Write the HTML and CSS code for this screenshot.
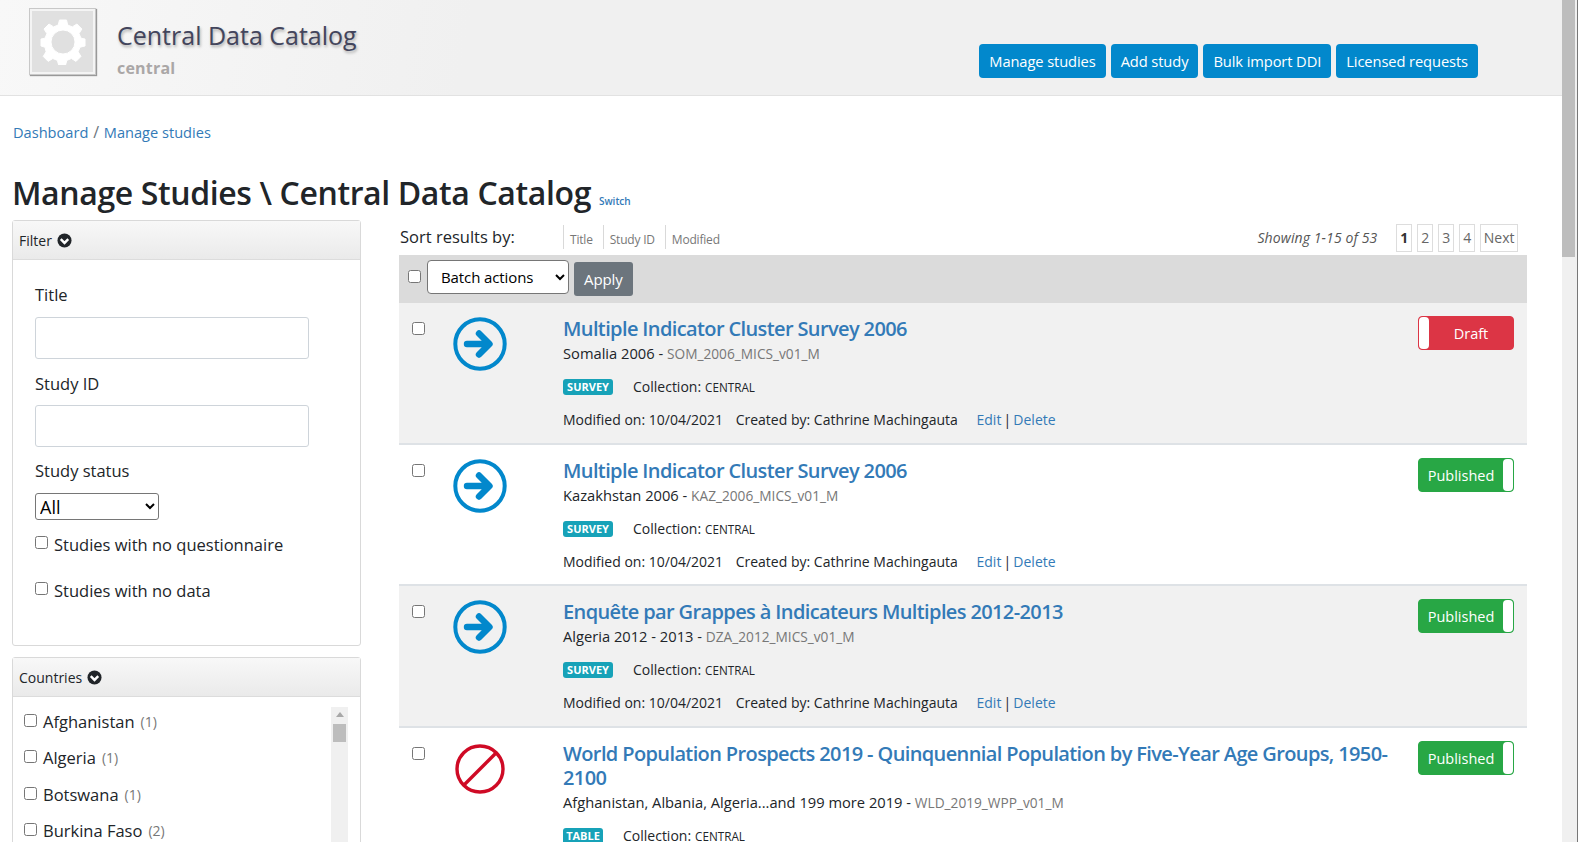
FILE: index.html
```html
<!DOCTYPE html>
<html lang="en">
  <head>
    <meta charset="UTF-8" />
    <meta name="viewport" content="width=device-width, initial-scale=1.0" />
    <title>Manage Studies - Central Data Catalog</title>
    <link rel="stylesheet" href="styles.css">
  </head>
  <body>
    <svg class="icon-defs" width="0" height="0">
      <symbol id="chevron-circle" viewBox="0 0 16 16">
        <circle cx="8" cy="8" r="7.5" fill="#212529" />
        <path d="M4 6.6 8 10.6 12 6.6" fill="none" stroke="#fff" stroke-width="2.6" />
      </symbol>
      <symbol id="arrow-circle" viewBox="0 0 54 54">
        <circle cx="27" cy="27" r="24.7" fill="none" stroke="#0288cc" stroke-width="4" />
        <path d="M14 27H36M26 16.5 36.5 27 26 37.5" fill="none" stroke="#0288cc" stroke-width="6.4" stroke-linecap="round" stroke-linejoin="round" />
      </symbol>
      <symbol id="no-circle" viewBox="0 0 50 50">
        <circle cx="25" cy="25" r="23" fill="none" stroke="#cf0a25" stroke-width="3.4" />
        <path d="M9 41 41 9" fill="none" stroke="#cf0a25" stroke-width="3.4" />
      </symbol>
    </svg>

    <div class="page">
      <header class="site-header">
        <div class="logo">
          <svg width="46" height="46" viewBox="0 0 46 46">
            <path fill="#fff" fill-rule="evenodd" stroke="#fff" stroke-width="1" stroke-linejoin="round" d="M19.5 1h7l1.2 5 4.6 1.9 4.6-2.9 5 5-2.9 4.6L41 19.2l4 .8v7l-5 1.2-1.9 4.6 2.9 4.6-5 5-4.6-2.9-4.6 1.9-1.2 4.5h-7l-1.2-4.5-4.6-1.9-4.6 2.9-5-5 2.9-4.6L5 28.2 1 27v-7l4-.8 1.9-4.6-2.9-4.6 5-5 4.6 2.9 4.6-1.9zM23 11a12 12 0 1 0 0 24 12 12 0 0 0 0-24z" />
          </svg>
        </div>
        <div class="site-title">
          <h3>Central Data Catalog</h3>
          <span>central</span>
        </div>
        <nav class="top-actions">
          <a href="#">Manage studies</a>
          <a href="#">Add study</a>
          <a href="#">Bulk import DDI</a>
          <a href="#">Licensed requests</a>
        </nav>
      </header>

      <main class="content">
        <div class="breadcrumb"><a href="#">Dashboard</a> <i>/</i> <a href="#">Manage studies</a></div>
        <h1>Manage Studies \ Central Data Catalog <a href="#" class="switch">Switch</a></h1>

        <div class="columns">
          <aside class="sidebar">
            <section class="panel">
              <div class="panel-head">Filter <svg><use href="#chevron-circle" /></svg></div>
              <div class="filter-body">
                <label class="field-label">Title</label>
                <input type="text" class="text-input" />
                <label class="field-label">Study ID</label>
                <input type="text" class="text-input" />
                <label class="field-label">Study status</label>
                <select class="status-select"><option>All</option></select>
                <label class="check-line"><input type="checkbox" /> Studies with no questionnaire</label>
                <label class="check-line"><input type="checkbox" /> Studies with no data</label>
              </div>
            </section>

            <section class="panel">
              <div class="panel-head">Countries <svg><use href="#chevron-circle" /></svg></div>
              <div class="country-list">
                <label><input type="checkbox" /> Afghanistan <span>(1)</span></label>
                <label><input type="checkbox" /> Algeria <span>(1)</span></label>
                <label><input type="checkbox" /> Botswana <span>(1)</span></label>
                <label><input type="checkbox" /> Burkina Faso <span>(2)</span></label>
                <div class="mini-scroll"><b></b><em></em></div>
              </div>
            </section>
          </aside>

          <section class="results">
            <div class="sort-row">
              <span class="sort-label">Sort results by:</span>
              <a href="#" class="sort-link">Title</a>
              <a href="#" class="sort-link">Study ID</a>
              <a href="#" class="sort-link">Modified</a>
              <span class="showing">Showing 1-15 of 53</span>
              <div class="pager">
                <a href="#" class="current">1</a>
                <a href="#">2</a>
                <a href="#">3</a>
                <a href="#">4</a>
                <a href="#">Next</a>
              </div>
            </div>

            <div class="batch-bar">
              <input type="checkbox" />
              <select class="batch-select"><option>Batch actions</option></select>
              <button class="apply">Apply</button>
            </div>

            <article class="study">
              <input type="checkbox" />
              <svg class="study-icon"><use href="#arrow-circle" /></svg>
              <div class="study-body">
                <a href="#" class="study-title">Multiple Indicator Cluster Survey 2006</a>
                <div class="study-sub">Somalia 2006 - <span>SOM_2006_MICS_v01_M</span></div>
                <div class="study-meta"><b class="badge">SURVEY</b> Collection: <small>CENTRAL</small></div>
                <div class="study-foot">Modified on: 10/04/2021 <span class="by">Created by: Cathrine Machingauta</span> <span class="links"><a href="#">Edit</a> | <a href="#">Delete</a></span></div>
              </div>
              <div class="status draft"><i></i><span>Draft</span></div>
            </article>

            <article class="study">
              <input type="checkbox" />
              <svg class="study-icon"><use href="#arrow-circle" /></svg>
              <div class="study-body">
                <a href="#" class="study-title">Multiple Indicator Cluster Survey 2006</a>
                <div class="study-sub">Kazakhstan 2006 - <span>KAZ_2006_MICS_v01_M</span></div>
                <div class="study-meta"><b class="badge">SURVEY</b> Collection: <small>CENTRAL</small></div>
                <div class="study-foot">Modified on: 10/04/2021 <span class="by">Created by: Cathrine Machingauta</span> <span class="links"><a href="#">Edit</a> | <a href="#">Delete</a></span></div>
              </div>
              <div class="status published"><span>Published</span><i></i></div>
            </article>

            <article class="study">
              <input type="checkbox" />
              <svg class="study-icon"><use href="#arrow-circle" /></svg>
              <div class="study-body">
                <a href="#" class="study-title">Enquête par Grappes à Indicateurs Multiples 2012-2013</a>
                <div class="study-sub">Algeria 2012 - 2013 - <span>DZA_2012_MICS_v01_M</span></div>
                <div class="study-meta"><b class="badge">SURVEY</b> Collection: <small>CENTRAL</small></div>
                <div class="study-foot">Modified on: 10/04/2021 <span class="by">Created by: Cathrine Machingauta</span> <span class="links"><a href="#">Edit</a> | <a href="#">Delete</a></span></div>
              </div>
              <div class="status published"><span>Published</span><i></i></div>
            </article>

            <article class="study">
              <input type="checkbox" />
              <svg class="study-icon no-data"><use href="#no-circle" /></svg>
              <div class="study-body">
                <a href="#" class="study-title">World Population Prospects 2019 - Quinquennial Population by Five-Year Age Groups, 1950-2100</a>
                <div class="study-sub">Afghanistan, Albania, Algeria...and 199 more 2019 - <span>WLD_2019_WPP_v01_M</span></div>
                <div class="study-meta"><b class="badge table">TABLE</b> Collection: <small>CENTRAL</small></div>
              </div>
              <div class="status published"><span>Published</span><i></i></div>
            </article>
          </section>
        </div>
      </main>
    </div>

    <div class="page-scroll"><b></b></div>
  </body>
</html>
```

FILE: styles.css
```css
* {
  box-sizing: border-box;
}

html,
body {
  height: 100%;
  overflow: hidden;
}

body {
  margin: 0;
  font-family: "Open Sans", "Noto Sans", sans-serif;
  font-size: 16px;
  color: #212529;
  background: #fff;
}

a {
  color: #337ab7;
  text-decoration: none;
}

.icon-defs {
  position: absolute;
}

.page {
  width: 1562px;
}

/* header */
.site-header {
  display: flex;
  height: 96px;
  padding: 8px 0 0 29px;
  background: linear-gradient(100deg, #f8f8f8, #f0f0f0 30%);
  border-bottom: 1px solid #e2e2e2;
}

.logo {
  display: flex;
  align-items: center;
  justify-content: center;
  width: 67px;
  height: 67px;
  background: #e0e0e0;
  border: 3px solid #f4f4f4;
  outline: 1px solid #c8c8c8;
  outline-offset: -1px;
  box-shadow: 1px 1px 1px #999;
}

.site-title {
  padding: 11px 0 0 21px;
}

.site-title h3 {
  margin: 0;
  font-size: 25px;
  line-height: 32px;
  font-weight: 400;
  color: #43455c;
  text-shadow: 1px 2px 3px rgba(0, 0, 0, 0.3);
}

.site-title span {
  display: block;
  margin-top: 6px;
  font-size: 16px;
  line-height: 22px;
  font-weight: 700;
  letter-spacing: 0.2px;
  color: #aaa7a7;
}

.top-actions {
  display: flex;
  gap: 5px;
  margin-left: auto;
  padding: 36px 84px 0 0;
}

.top-actions a {
  height: 34px;
  padding: 0 10px;
  font-size: 14.7px;
  line-height: 34px;
  letter-spacing: -0.1px;
  color: #fff;
  background: #0288cc;
  border-radius: 4px;
}

/* page */
.content {
  padding: 0 35px 0 12px;
}

.breadcrumb {
  margin: 25px 0 0 1px;
  font-size: 14.6px;
  line-height: 22px;
}

.breadcrumb i {
  font-style: normal;
  font-size: 16px;
  color: #6c757d;
  margin: 0 1px;
}

h1 {
  margin: 29px 0 0;
  font-size: 32px;
  line-height: 42px;
  font-weight: 600;
  letter-spacing: -0.38px;
}

.switch {
  font-size: 10px;
  line-height: 1;
  letter-spacing: 0;
}

.columns {
  display: flex;
  gap: 38px;
  margin-top: 6px;
}

.sidebar {
  flex: 0 0 349px;
}

.panel {
  margin-bottom: 11px;
  background: #fff;
  border: 1px solid #d9d9d9;
  border-radius: 3px;
}

.panel-head {
  display: flex;
  align-items: center;
  gap: 5px;
  height: 39px;
  padding-left: 6px;
  font-size: 14px;
  background: linear-gradient(#f8f8f8, #eaeaea);
  border-bottom: 1px solid #dcdcdc;
}

.panel-head svg {
  width: 15px;
  height: 15px;
}

.filter-body {
  display: flex;
  flex-direction: column;
  align-items: flex-start;
  height: 385px;
  padding: 23px 22px;
}

.field-label {
  font-size: 16.5px;
  line-height: 24px;
}

.text-input {
  width: 274px;
  height: 42px;
  margin: 10px 0 13px;
  border: 1px solid #ced4da;
  border-radius: 3px;
}

.text-input + .field-label + .text-input {
  margin: 9px 0 12px;
}

.status-select {
  width: 124px;
  height: 27px;
  margin-top: 10px;
  font: inherit;
  font-size: 18px;
  background: #fff;
  border: 1px solid #767676;
  border-radius: 3px;
}

.check-line {
  display: flex;
  align-items: center;
  gap: 6px;
  margin-top: 12px;
  height: 24px;
  font-size: 16.5px;
}

.check-line + .check-line {
  margin-top: 22px;
}

.check-line input {
  margin: -3px 0 0;
}

.country-list input {
  margin: -2px 0 0;
}

.country-list {
  position: relative;
  height: 200px;
  padding: 12px 11px;
}

.country-list label {
  display: flex;
  align-items: center;
  gap: 6px;
  height: 24px;
  margin-bottom: 12.5px;
  font-size: 16.5px;
}

.country-list span {
  font-size: 14px;
  color: #777;
}

.mini-scroll {
  position: absolute;
  top: 10px;
  right: 12px;
  bottom: 0;
  width: 17px;
  background: #f0f0f0;
}

.mini-scroll em {
  display: block;
  width: 0;
  margin: 5px auto 0;
  border: 4px solid transparent;
  border-top: 0;
  border-bottom: 5px solid #a8a8a8;
}

.mini-scroll b {
  position: absolute;
  top: 17px;
  left: 2px;
  width: 13px;
  height: 18px;
  background: #bdbdbd;
}

/* results */
.results {
  flex: 0 0 1128px;
}

.sort-row {
  display: flex;
  align-items: flex-start;
  height: 35px;
  padding-top: 3px;
}

.sort-label {
  width: 164px;
  padding-left: 1px;
  font-size: 16.5px;
  line-height: 28px;
}

.sort-link {
  height: 24px;
  margin-top: 2px;
  padding: 6px 10px 0 6px;
  font-size: 12px;
  line-height: 18px;
  letter-spacing: -0.2px;
  color: #777;
  border-left: 1px solid #d9d9d9;
}

.showing {
  margin-left: auto;
  padding-top: 5px;
  font-size: 14px;
  font-style: italic;
  letter-spacing: 0.1px;
  color: #555;
}

.pager {
  display: flex;
  gap: 5px;
  margin: 1px 9px 0 19px;
}

.pager a {
  min-width: 16px;
  height: 28px;
  padding: 0 2.5px;
  font-size: 14px;
  line-height: 26px;
  text-align: center;
  color: #666;
  border: 1px solid #ddd;
}

.pager .current {
  font-weight: 700;
  color: #333;
}

.batch-bar {
  display: flex;
  align-items: flex-start;
  height: 48px;
  padding: 5px 0 0 9px;
  background: #dbdbdb;
}

.batch-bar input {
  margin: 10px 6px 0 0;
}

.batch-select {
  width: 142px;
  height: 34px;
  padding-left: 9px;
  font: inherit;
  font-size: 15px;
  letter-spacing: -0.1px;
  background: #fff;
  border: 1px solid #767676;
  border-radius: 4px;
}

.apply {
  height: 34px;
  margin: 2px 0 0 5px;
  padding: 0 10px;
  font: inherit;
  font-size: 15px;
  letter-spacing: -0.1px;
  color: #fff;
  background: #6c757d;
  border: none;
  border-radius: 3px;
}

.study {
  display: flex;
  align-items: flex-start;
  min-height: 141.5px;
  padding: 13px 13px 0 13px;
  background: #fff;
  border-bottom: 2px solid #dee2e6;
}

.study:nth-of-type(odd) {
  background: #f1f1f1;
}

.study > input {
  flex: none;
  margin: 6px 0 0;
}

.study-icon {
  flex: none;
  width: 54px;
  height: 54px;
  margin: 1px 0 0 28px;
}

.study-icon.no-data {
  width: 50px;
  height: 50px;
  margin: 3px 2px 0 30px;
}

.study-body {
  flex: 1;
  margin-left: 56px;
  padding: 1px 20px 0 0;
}

.study-title {
  display: block;
  font-size: 20px;
  line-height: 24px;
  font-weight: 600;
  letter-spacing: -0.62px;
}

.study-sub {
  margin-top: 2px;
  font-size: 14.7px;
  line-height: 21px;
}

.study-sub span {
  font-size: 13.7px;
  color: #777;
}

.study-meta {
  display: flex;
  align-items: center;
  margin-top: 13px;
  font-size: 14px;
  line-height: 20px;
}

.study-meta small {
  margin-left: 4px;
  font-size: 11.7px;
}

.badge {
  width: 50px;
  height: 16px;
  margin-right: 20px;
  font-size: 11px;
  line-height: 16px;
  text-align: center;
  color: #fff;
  background: #17a2b8;
  border-radius: 3px;
}

.badge.table {
  width: 40px;
}

.study-foot {
  margin-top: 12px;
  font-size: 14px;
  line-height: 21px;
}

.study-foot .by {
  margin-left: 9px;
}

.study-foot .links {
  margin-left: 15px;
  word-spacing: -1.5px;
}

.status {
  flex: none;
  display: flex;
  width: 96px;
  height: 34px;
  font-size: 14.5px;
  line-height: 33px;
  text-align: center;
  color: #fff;
  border: 1px solid;
  border-radius: 4px;
}

.status span {
  flex: 1;
}

.status i {
  width: 10px;
  background: #fff;
  border-radius: 4px;
}

.status.draft {
  background: #dc3545;
  border-color: #dc3545;
}

.status.published {
  background: #28a745;
  border-color: #28a745;
}

.page-scroll {
  position: absolute;
  top: 0;
  right: 1px;
  width: 16px;
  height: 100%;
  background: #f0f0f0;
  border-right: 1px solid #777;
}

.page-scroll b {
  display: block;
  width: 13px;
  height: 257px;
  background: #bdbdbd;
}
```
